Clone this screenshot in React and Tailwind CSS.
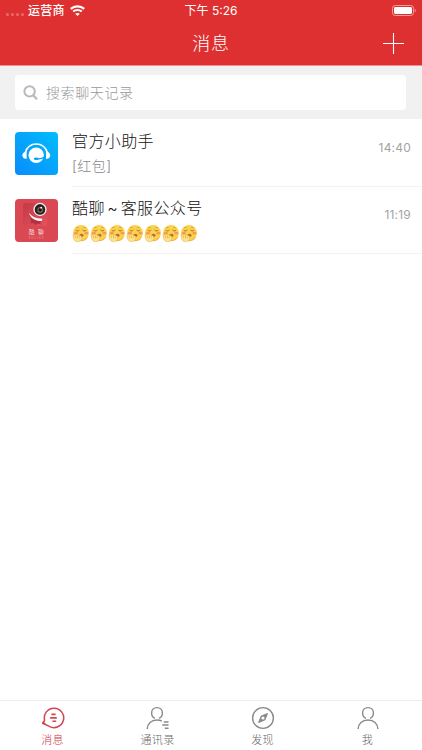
import React from 'react';

const WifiIcon = () => (
  <svg className="w-[15px] h-[11px]" viewBox="0 0 15 11" fill="none" stroke="#fff">
    <path d="M0.8 3.9C4.6 0.4 10.4 0.4 14.2 3.9" strokeWidth="2.2" />
    <path d="M3.2 6.6C5.6 4.4 9.4 4.4 11.8 6.6" strokeWidth="2" />
    <path d="M7.5 10.9L5.2 8.7C6.5 7.6 8.5 7.6 9.8 8.7Z" fill="#fff" stroke="none" />
  </svg>
);

const BatteryIcon = () => (
  <svg className="w-6 h-[11px]" viewBox="0 0 24 11" fill="none">
    <rect x="0.5" y="0.5" width="21" height="10" rx="2.8" stroke="#f39a9b" />
    <rect x="2" y="2" width="18" height="7" rx="1.4" fill="#fff" />
    <path d="M22.7 3.8C24.2 4.3 24.2 6.7 22.7 7.2Z" fill="#f39a9b" />
  </svg>
);

const SearchIcon = () => (
  <svg className="w-[15px] h-[15px]" viewBox="0 0 15 15" fill="none" stroke="#bababa" strokeWidth="2">
    <circle cx="6.6" cy="6.4" r="5.2" />
    <path d="M10.2 10.2L14 14.2" strokeWidth="2.3" />
  </svg>
);

const HelperAvatar = () => (
  <svg className="w-[43px] h-[43px]" viewBox="0 0 43 43">
    <defs>
      <linearGradient id="helper" x1="1" y1="0" x2="0" y2="1">
        <stop offset="0" stopColor="#02bdfb" />
        <stop offset="1" stopColor="#098cfb" />
      </linearGradient>
    </defs>
    <rect width="43" height="43" rx="4" fill="url(#helper)" />
    <path d="M10.4 20.5C11.4 15.4 15.8 12.1 21.3 12.1S31.2 15.4 32.2 20.5" fill="none" stroke="#fff" strokeWidth="1.5" />
    <path d="M11.6 19.4V27C8.8 26.8 7.4 25.6 7.4 23.3S9 19.5 11.6 19.4Z" fill="#fff" />
    <path d="M31 19.4V27C33.8 26.8 35.2 25.6 35.2 23.3S33.6 19.5 31 19.4Z" fill="#fff" />
    <circle cx="21.2" cy="23.2" r="7.7" fill="#fff" />
    <path d="M30.4 24.6C27.8 26.6 24.8 27.2 21 27" fill="none" stroke="#079ffb" strokeWidth="1.2" />
    <ellipse cx="21.2" cy="26.8" rx="2.4" ry="1.3" fill="#079ffb" />
  </svg>
);

const KuliaoAvatar = () => (
  <svg className="w-[43px] h-[43px]" viewBox="0 0 43 43">
    <defs>
      <linearGradient id="badge" x1="0" y1="0" x2="1" y2="1">
        <stop offset="0" stopColor="#c03a45" />
        <stop offset="1" stopColor="#e6525e" />
      </linearGradient>
    </defs>
    <rect width="43" height="43" rx="4" fill="#d94853" />
    <rect x="8" y="4" width="24" height="23" rx="3" fill="url(#badge)" />
    <path d="M14 15C15 19 20 22 27 22L24.5 23.5L27 25.5L22 24.5L20.5 26.5L18.5 24L15.5 24.5L16 21.5Z" fill="#b92f3d" />
    <path d="M14 13.8C16.6 17.7 21 19.6 27.2 19.8C27.6 21.6 26.8 22.2 25 22.1C19.5 21.5 15.2 18.9 14 13.8Z" fill="#fff" />
    <circle cx="25" cy="10.4" r="6.6" fill="#f3eeee" />
    <circle cx="25" cy="10.4" r="5.3" fill="#272222" />
    <circle cx="25.2" cy="10.9" r="3" fill="#7a5c49" />
    <circle cx="25.2" cy="10.8" r="1.5" fill="#171212" />
    <circle cx="26.2" cy="8.7" r="0.9" fill="#fff" />
    <g fill="#fbdcd8" textAnchor="middle" fontFamily="'Noto Sans CJK SC', sans-serif">
      <text x="16.6" y="35" fontSize="5.8">酷</text>
      <text x="25.9" y="35" fontSize="5.8">聊</text>
      <text x="21.8" y="39.5" fontSize="2.8" letterSpacing="1" fill="#ef9898">KULIAO</text>
    </g>
  </svg>
);

const YawnFace = () => (
  <svg className="w-[18px] h-[18px]" viewBox="0 0 18 18" fill="none">
    <circle cx="9" cy="8.9" r="7.9" fill="#fcd14e" />
    <path d="M3 13.2C6 17.2 13 17.4 16.2 12C14.6 18.6 5.2 18.8 3 13.2Z" fill="#f2ad38" />
    <ellipse cx="3.9" cy="9.2" rx="2" ry="1.4" fill="#f79a53" />
    <ellipse cx="14.4" cy="9.2" rx="1.9" ry="1.4" fill="#f79a53" />
    <path d="M4 6.4C4.8 7.3 6.3 7.2 7.1 6.2M10.7 6.2C11.5 7.2 12.9 7.3 13.8 6.4" stroke="#97642a" strokeWidth="0.9" strokeLinecap="round" />
    <path d="M4.5 3.9L6.2 3.3M11.6 3.3L13.3 3.9" stroke="#c58d37" strokeWidth="0.7" strokeLinecap="round" />
    <ellipse cx="9.5" cy="11.3" rx="2" ry="1.6" fill="#b96a33" />
    <path d="M1.2 10.2C1.9 9.4 2.8 10.2 2.9 11.5C3.6 10 4.9 10 5.2 11.6C6 10.4 7.3 10.6 7.5 11.9C8.9 11.3 10 12.2 9.6 13.5C10.3 15 8.5 17.5 5.6 17.6C2.3 17.6 0.8 14.7 1.2 10.2Z" fill="#fde389" stroke="#eab24a" strokeWidth="0.6" />
    <path d="M3.2 12L3.9 14.3M5.4 12L5.7 14.2M7.5 12.5L7.1 14.4" stroke="#dda03a" strokeWidth="0.6" />
  </svg>
);

const MessageIcon = () => (
  <svg className="w-6 h-6" viewBox="0 0 24 24" fill="none" stroke="#d0454f">
    <path d="M3.7 14.6A9.7 9.7 0 1 1 8.2 20.3" strokeWidth="1.5" />
    <path d="M3.7 14.2L1.6 17.2L8.4 20.4" strokeWidth="1.5" strokeLinejoin="round" />
    <path d="M2.6 15.4L1 17.6L5.4 18.6Z" fill="#d0454f" stroke="none" />
    <path d="M10.4 8.4H14.6M9.1 11.9H15.8M11.4 15.3H15.2" strokeWidth="1.6" />
  </svg>
);

const ContactsIcon = () => (
  <svg className="w-6 h-6" viewBox="0 0 24 24" fill="none" stroke="#8a8a8a" strokeWidth="1.4">
    <path d="M9 12.4C7 11.4 5.6 9.4 5.6 6.9C5.6 3.7 8 1.6 11 1.6S16.4 3.7 16.4 6.9C16.4 9.4 15 11.4 13 12.4" />
    <path d="M1.2 23C1.4 17.6 5.2 14 11 14C12.9 14 14.4 14.3 15.8 15.2" />
    <path d="M17.8 15.9H22.5M16.3 19H22.5M18.8 22.2H22.5" strokeWidth="1.5" />
  </svg>
);

const DiscoverIcon = () => (
  <svg className="w-6 h-6" viewBox="0 0 24 24" fill="none" stroke="#8a8a8a" strokeWidth="1.4">
    <circle cx="12" cy="12" r="10.4" />
    <path d="M16.5 7.5L10.2 10.1L7.6 16.5L13.9 13.9Z" fill="#8a8a8a" strokeWidth="1" />
    <circle cx="12" cy="12" r="1.6" fill="#fff" stroke="none" />
  </svg>
);

const MeIcon = () => (
  <svg className="w-6 h-6" viewBox="0 0 24 24" fill="none" stroke="#8a8a8a" strokeWidth="1.4">
    <path d="M10 12.4C8 11.4 6.6 9.4 6.6 6.9C6.6 3.7 9 1.6 12 1.6S17.4 3.7 17.4 6.9C17.4 9.4 16 11.4 14 12.4" />
    <path d="M2.1 23C2.3 17.6 6.2 14 12 14S21.7 17.6 21.9 23" />
  </svg>
);

const chats = [
  { name: '官方小助手', time: '14:40', avatar: HelperAvatar, text: '[红包]' },
  {
    name: (
      <>
        酷聊<span className="mx-[2.5px]">~</span>客服公众号
      </>
    ),
    time: '11:19',
    avatar: KuliaoAvatar,
    faces: 7,
  },
];

const tabs = [
  { label: '消息', icon: MessageIcon, active: true },
  { label: '通讯录', icon: ContactsIcon },
  { label: '发现', icon: DiscoverIcon },
  { label: '我', icon: MeIcon },
];

const ChatRow = ({ chat }) => {
  const Avatar = chat.avatar;
  return (
    <div className="flex h-[67px] pl-[15px]">
      <div className="pt-[12px] w-[57px] shrink-0">
        <Avatar />
      </div>
      <div className="flex-1 flex justify-between border-b border-[#f3f3f3] pr-[11px]">
        <div className="pt-[9px]">
          <div className="text-[16px] leading-6 tracking-[0.4px] font-light text-[#111] whitespace-nowrap">{chat.name}</div>
          {chat.text && (
            <div className="text-[14px] leading-[18px] mt-1 tracking-[0.5px] font-light text-[#888]">{chat.text}</div>
          )}
          {chat.faces && (
            <div className="flex mt-1">
              {Array.from({ length: chat.faces }).map((_, i) => (
                <YawnFace key={i} />
              ))}
            </div>
          )}
        </div>
        <span className="pt-[19px] text-[12px] leading-[18px] tracking-[0.2px] text-[#a3a3a3]">{chat.time}</span>
      </div>
    </div>
  );
};

export default function App() {
  return (
    <div className="flex flex-col w-full h-screen bg-white overflow-hidden font-[Inter,'Noto_Sans_CJK_SC',sans-serif]">
      {/* Header */}
      <header className="h-[66px] shrink-0 bg-[#df3031] border-b border-[#f29091] text-white">
        <div className="grid grid-cols-3 items-center h-[21px] text-[12px] leading-[21px]">
          <div className="flex items-center pl-[6px]">
            <div className="flex gap-[2px] w-[22px] pt-[7px]">
              <i className="w-[3px] h-[3px] rounded-full bg-[#ea6a6c]" />
              <i className="w-[3px] h-[3px] rounded-full bg-[#ea6a6c]" />
              <i className="w-[3px] h-[3px] rounded-full bg-[#ea6a6c]" />
              <i className="w-[3px] h-[3px] rounded-full bg-[#ea6a6c]" />
            </div>
            <span className="font-medium mr-[5px] tracking-[0.2px]">运营商</span>
            <WifiIcon />
          </div>
          <span className="text-center">下午 5:26</span>
          <div className="flex justify-end pr-[6px]">
            <BatteryIcon />
          </div>
        </div>
        <div className="grid grid-cols-3 items-center h-11">
          <span />
          <h1 className="pt-[2px] text-center text-[18px] leading-6 tracking-[0.8px] font-light">消息</h1>
          <div className="flex justify-end pr-[18px]">
            <svg className="w-[21px] h-[21px]" viewBox="0 0 21 21" stroke="#fff" strokeWidth="1.1">
              <path d="M10.5 0V21M0 10.5H21" />
            </svg>
          </div>
        </div>
      </header>

      {/* Search */}
      <div className="h-[53px] shrink-0 bg-[#f1f1f1] pt-[9px] pl-[15px] pr-4">
        <div className="flex items-center h-[35px] w-full rounded-[4px] bg-white pl-2">
          <SearchIcon />
          <span className="ml-2 text-[14px] leading-5 tracking-[0.6px] font-light text-[#999]">搜索聊天记录</span>
        </div>
      </div>

      {/* Chats */}
      <main className="flex-1 pt-px">
        {chats.map((chat) => (
          <ChatRow key={chat.time} chat={chat} />
        ))}
      </main>

      {/* Tab bar */}
      <nav className="grid grid-cols-4 h-[50px] shrink-0 border-t border-[#ececec] pt-[5px] pr-[2px]">
        {tabs.map(({ label, icon: Icon, active }) => (
          <div key={label} className="flex flex-col items-center">
            <Icon />
            <span className={active ? 'text-[11px] leading-4 mt-[2px] tracking-[0.3px] font-light text-[#d0353f]' : 'text-[11px] leading-4 mt-[2px] tracking-[0.3px] font-light text-[#666]'}>
              {label}
            </span>
          </div>
        ))}
      </nav>
    </div>
  );
}
